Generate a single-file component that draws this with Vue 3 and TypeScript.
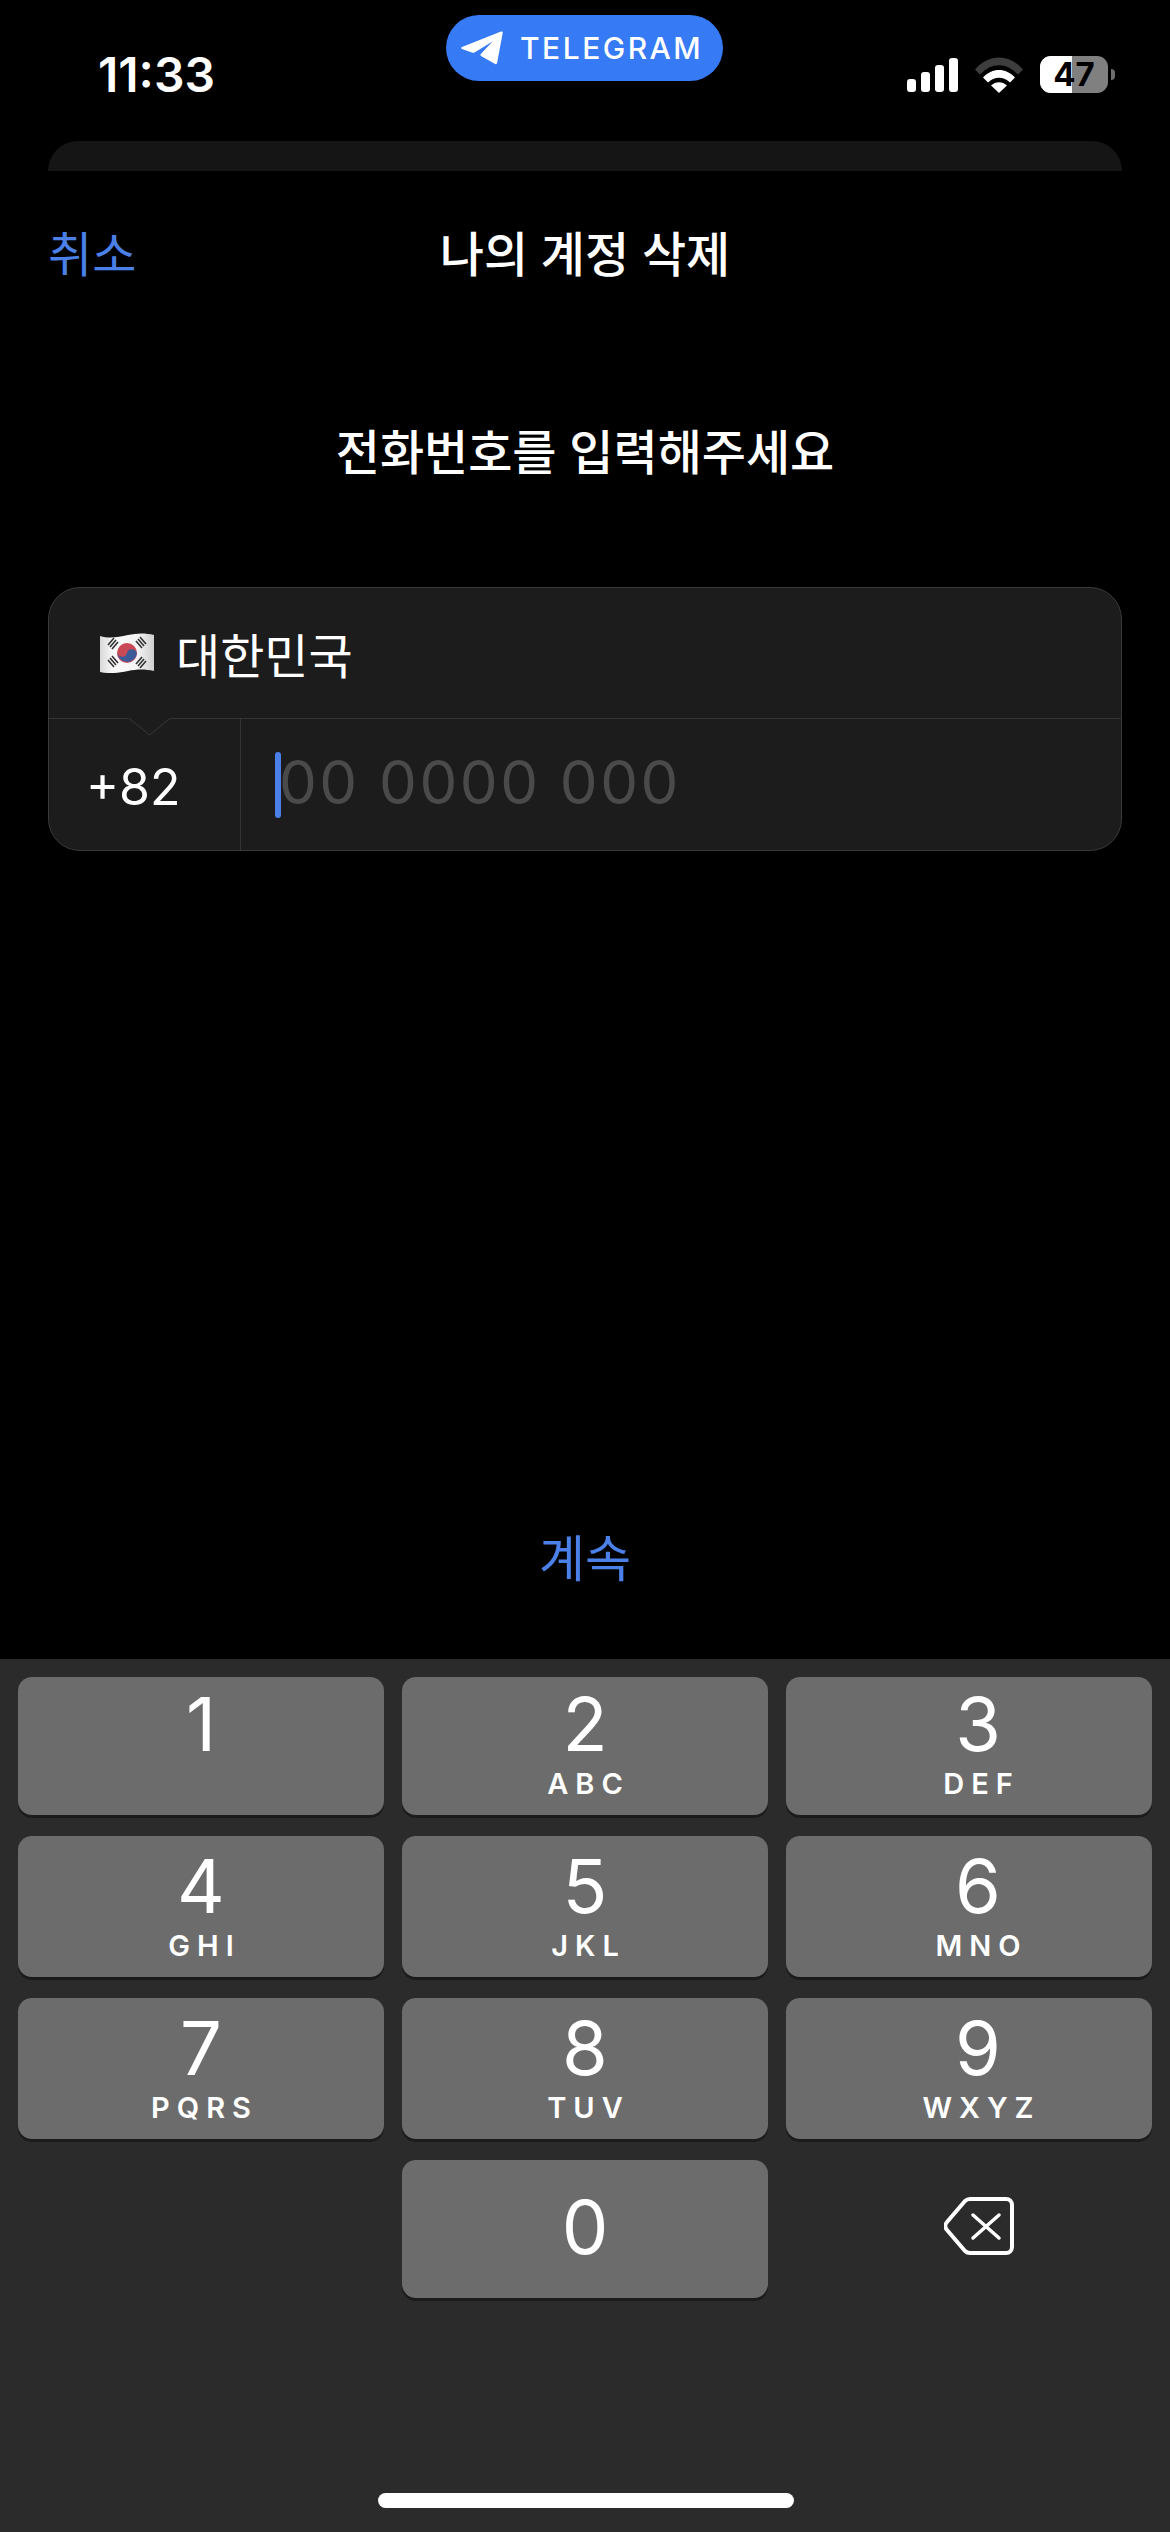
<script setup lang="ts">
interface Key {
  digit: string
  letters: string
}

const keys: Key[] = [
  { digit: '1', letters: '' },
  { digit: '2', letters: 'ABC' },
  { digit: '3', letters: 'DEF' },
  { digit: '4', letters: 'GHI' },
  { digit: '5', letters: 'JKL' },
  { digit: '6', letters: 'MNO' },
  { digit: '7', letters: 'PQRS' },
  { digit: '8', letters: 'TUV' },
  { digit: '9', letters: 'WXYZ' }
]

const signalBars = [13, 20, 27, 34]
</script>

<template>
  <div class="page">
    <header class="status">
      <span class="time">11:33</span>
      <div class="pill">
        <svg class="plane" viewBox="0 0 42 34" fill="#fff">
          <path d="M40 .6c1-.4 1.900.4 1.700 1.400l-5.600 30c-.2 1-1.200 1.400-2 1L20 25c-.8-.5-.8-1.400-.2-2L31.500 10.500 13.500 21.500c-.6.4-1.300.4-2 .2L1 18c-1.200-.4-1.200-1.600 0-2Z" />
        </svg>
        <span class="pill-label">TELEGRAM</span>
      </div>
      <div class="indicators">
        <div class="signal">
          <i v-for="h in signalBars" :key="h" :style="{ height: h + 'px' }"></i>
        </div>
        <svg class="wifi" viewBox="0 0 48 36">
          <path d="M0 12.500C13.500-3.500 34.500-3.500 48 12.500l-5 5C31.500 5 16.500 5 5 17.500Z" fill="#3d3d3d" />
          <path d="M8 20.500c9-10 23-10 32 0l-5 5c-6-6.500-16-6.500-22 0Z" fill="#fff" />
          <path d="M16 28.500c4.500-4.500 11.500-4.500 16 0l-8 7.500Z" fill="#fff" />
        </svg>
        <div class="battery">
          <div class="battery-body">
            <div class="battery-fill"></div>
            <span class="battery-text">47</span>
          </div>
          <div class="battery-tip"></div>
        </div>
      </div>
    </header>

    <div class="stub"></div>

    <nav class="nav">
      <span class="cancel">취소</span>
      <span class="nav-title">나의 계정 삭제</span>
      <span></span>
    </nav>

    <h1 class="heading">전화번호를 입력해주세요</h1>

    <section class="form">
      <div class="country">
        <svg class="flag" viewBox="0 0 54 40">
          <defs>
            <linearGradient id="cloth" x1="0" y1="0" x2="1" y2="0">
              <stop offset="0" stop-color="#d9d9d9" />
              <stop offset="0.25" stop-color="#fafafa" />
              <stop offset="0.7" stop-color="#f4f4f4" />
              <stop offset="1" stop-color="#cfcfcf" />
            </linearGradient>
          </defs>
          <path d="M0 3c10 3 18 1 28-1 9-2 18-2 26 0v36c-9-2-17-2-26 0-10 2-18 3-28 1Z" fill="url(#cloth)" />
          <circle cx="27" cy="20" r="10" fill="#c94a56" />
          <path d="M17.200 18.500a5 5 0 0 0 9.800 1.500 5 5 0 0 1 9.800 1.500A10 10 0 0 1 17.200 18.500Z" fill="#3d5a99" />
          <g stroke="#333" stroke-width="1.600">
            <path d="M8 12l6-7M10 14l6-7M12 16l6-7" />
            <path d="M36 8l6 7M38 6l6 7M40 4l6 7" />
            <path d="M8 27l6 7M10 25l6 7M12 23l6 7" />
            <path d="M36 31l6-7M38 33l6-7M40 35l6-7" />
          </g>
        </svg>
        <span class="country-name">대한민국</span>
      </div>
      <div class="phone">
        <div class="code">
          <span class="notch"></span>
          <span>+82</span>
        </div>
        <div class="number">
          <span class="caret"></span>
          <span class="placeholder">00 0000 000</span>
        </div>
      </div>
    </section>

    <div class="continue">계속</div>

    <section class="keyboard">
      <div class="keypad">
        <div v-for="k in keys" :key="k.digit" class="key">
          <span class="digit">{{ k.digit }}</span>
          <span class="letters">{{ k.letters }}</span>
        </div>
        <div></div>
        <div class="key key-zero">
          <span class="digit">0</span>
        </div>
        <div class="backspace">
          <svg viewBox="0 0 70 58" fill="none" stroke="#fff" stroke-width="4" stroke-linecap="round" stroke-linejoin="round">
            <path d="M26 2h36c3.500 0 6 2.500 6 6v42c0 3.500-2.500 6-6 6H26c-2 0-3.500-.6-5-2L3 33c-2-2.200-2-5.800 0-8L21 4c1.500-1.400 3-2 5-2Z" />
            <path d="M29 18l26 23M55 18L29 41" stroke-width="3.500" />
          </svg>
        </div>
      </div>
      <div class="home-indicator"></div>
    </section>
  </div>
</template>

<style scoped>
.page {
  width: 1170px;
  height: 2532px;
  background: #000;
  color: #fff;
  display: flex;
  flex-direction: column;
  overflow: hidden;
  font-family: Inter, "Noto Sans CJK KR", sans-serif;
}

.status {
  position: relative;
  height: 141px;
  flex-shrink: 0;
  display: flex;
  justify-content: space-between;
  align-items: flex-start;
  padding: 46px 55px 0 98px;
  box-sizing: border-box;
}

.time {
  font-size: 48px;
  font-weight: 600;
  line-height: 58px;
}

.pill {
  position: absolute;
  left: 446px;
  top: 15px;
  width: 277px;
  height: 66px;
  border-radius: 33px;
  background: #367bf5;
  display: flex;
  align-items: center;
  padding-left: 15px;
  box-sizing: border-box;
}

.plane {
  width: 42px;
  height: 34px;
}

.pill-label {
  margin-left: 17px;
  font-size: 30px;
  font-weight: 500;
  letter-spacing: 2.500px;
}

.indicators {
  display: flex;
  align-items: center;
  height: 37px;
  margin-top: 10px;
}

.signal {
  display: flex;
  align-items: flex-end;
  gap: 5px;
  height: 34px;
}

.signal i {
  display: block;
  width: 9px;
  border-radius: 3px;
  background: #fff;
}

.wifi {
  width: 48px;
  height: 36px;
  margin-left: 17px;
}

.battery {
  display: flex;
  align-items: center;
  margin-left: 17px;
}

.battery-body {
  position: relative;
  width: 68px;
  height: 37px;
  border-radius: 11px;
  background: #808080;
}

.battery-fill {
  width: 32px;
  height: 100%;
  border-radius: 11px 0 0 11px;
  background: #fff;
}

.battery-text {
  position: absolute;
  inset: 0;
  text-align: center;
  color: #000;
  font-size: 33px;
  font-weight: 700;
  line-height: 37px;
}

.battery-tip {
  width: 4px;
  height: 11px;
  margin-left: 3px;
  border-radius: 0 4px 4px 0;
  background: #6e6e6e;
}

.stub {
  height: 30px;
  flex-shrink: 0;
  margin: 0 48px;
  border-radius: 30px 30px 0 0;
  background: #151515;
}

.nav {
  display: grid;
  grid-template-columns: 1fr auto 1fr;
  align-items: center;
  height: 60px;
  margin-top: 45px;
  padding: 0 48px;
}

.cancel {
  font-size: 48px;
  color: #4a80e8;
}

.nav-title {
  font-size: 48px;
  font-weight: 500;
}

.heading {
  margin: 147px 0 0;
  text-align: center;
  font-size: 48px;
  font-weight: 500;
  line-height: 60px;
}

.form {
  margin: 104px 48px 0;
  height: 264px;
  flex-shrink: 0;
  border: 1px solid #3a3a3a;
  border-radius: 32px;
  background: #1c1c1c;
  box-sizing: border-box;
  display: flex;
  flex-direction: column;
}

.country {
  height: 131px;
  flex-shrink: 0;
  display: flex;
  align-items: center;
  padding-left: 51px;
  border-bottom: 1px solid #343434;
  box-sizing: border-box;
}

.flag {
  width: 54px;
  height: 40px;
}

.country-name {
  margin-left: 22px;
  font-size: 48px;
}

.phone {
  flex: 1;
  display: flex;
}

.code {
  position: relative;
  width: 192px;
  flex-shrink: 0;
  border-right: 1px solid #343434;
  box-sizing: border-box;
  display: flex;
  align-items: center;
  padding: 5px 0 0 37px;
  font-size: 50px;
}

/* little pointer hanging off the divider */
.notch {
  position: absolute;
  left: 87px;
  top: -14px;
  width: 26px;
  height: 26px;
  background: #1c1c1c;
  border-right: 1px solid #343434;
  border-bottom: 1px solid #343434;
  transform: rotate(45deg) skew(-6deg, -6deg);
}

.number {
  position: relative;
  flex: 1;
  display: flex;
  align-items: center;
  padding: 0 0 5px 38px;
}

.caret {
  position: absolute;
  left: 34px;
  top: 33px;
  width: 6px;
  height: 66px;
  border-radius: 3px;
  background: #4a80e8;
}

.placeholder {
  font-size: 60px;
  color: #4a4a4a;
  letter-spacing: 2.500px;
  line-height: 1;
  white-space: pre;
}

.continue {
  margin-top: 676px;
  text-align: center;
  font-size: 50px;
  line-height: 64px;
  color: #4a80e8;
}

.keyboard {
  position: relative;
  flex: 1;
  margin-top: 68px;
  background: #2b2b2b;
  padding: 18px 18px 0;
}

.keypad {
  display: grid;
  grid-template-columns: repeat(3, 366px);
  grid-template-rows: 138px 141px 141px 138px;
  gap: 21px 18px;
}

.key {
  border-radius: 14px;
  background: #6c6c6c;
  box-shadow: 0 3px 0 #1b1b1b;
  display: flex;
  flex-direction: column;
  align-items: center;
  padding-top: 10px;
  box-sizing: border-box;
}

.key:nth-child(n + 4) {
  padding-top: 13px;
}

/* right column glyphs sit a bit off centre in the reference */
.key:nth-child(3n) {
  padding-left: 18px;
}

.digit {
  font-size: 74px;
  font-weight: 400;
  line-height: 74px;
}

.letters {
  margin-top: 8px;
  font-size: 29px;
  font-weight: 600;
  line-height: 30px;
  letter-spacing: 7px;
  padding-left: 7px;
}

.key.key-zero {
  justify-content: center;
  padding: 0 0 4px;
}

.backspace {
  display: flex;
  align-items: center;
  justify-content: center;
  padding: 0 0 6px 19px;
}

.backspace svg {
  width: 70px;
  height: 58px;
}

.home-indicator {
  position: absolute;
  left: 378px;
  bottom: 24px;
  width: 416px;
  height: 15px;
  border-radius: 8px;
  background: #fff;
}
</style>

<style>
html,
body {
  background: #000;
}
</style>
